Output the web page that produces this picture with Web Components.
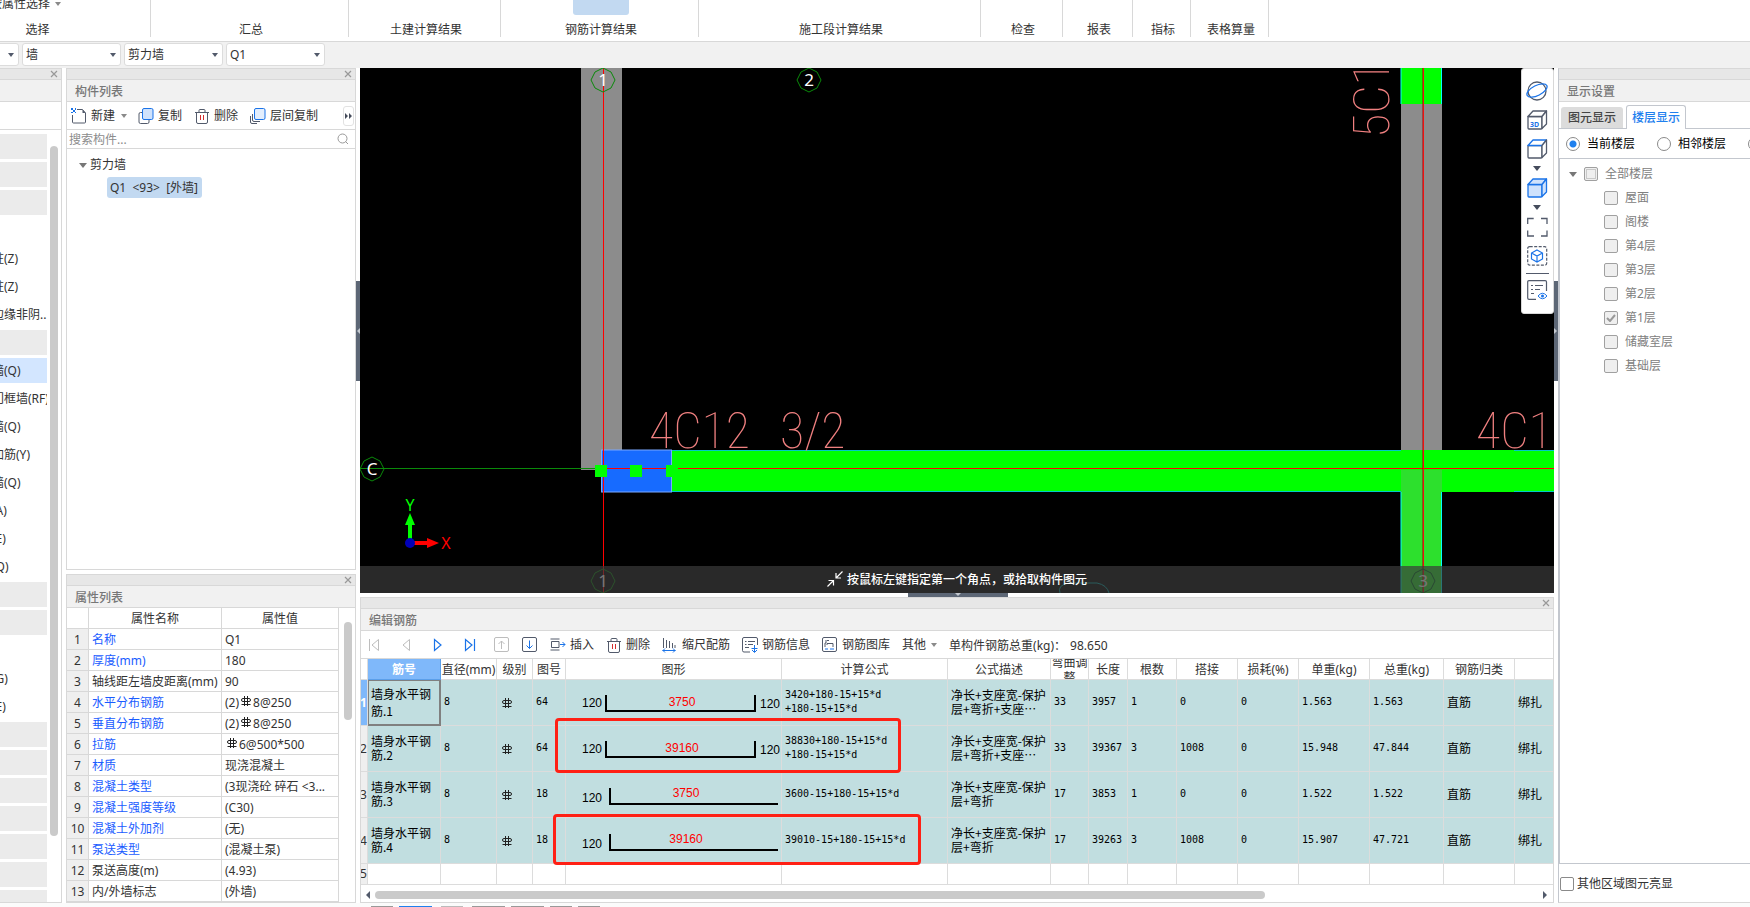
<!DOCTYPE html>
<html lang="zh-CN">
<head>
<meta charset="utf-8">
<title>钢筋算量</title>
<style>
  body { margin: 0; background: #fff; color: #333; font: 12px/16px "Noto Sans", "Noto Sans CJK SC", sans-serif; }
</style>
</head>
<body>
<app-shell></app-shell>
<script>
const BASE = `
  *, *::before, *::after { box-sizing: border-box; }
  button { font: inherit; color: inherit; background: none; border: 0; padding: 0; margin: 0; white-space: nowrap; }
`;
const define = (name, html) => {
  const tpl = document.createElement('template');
  customElements.define(name, class extends HTMLElement {
    constructor() {
      super();
      this.attachShadow({ mode: 'open' });
    }
    connectedCallback() {
      if (this.shadowRoot.childNodes.length) return;
      tpl.innerHTML = `<style>${BASE}</style>` + (typeof html === 'function' ? html(this) : html);
      this.shadowRoot.append(tpl.content.cloneNode(true));
    }
  });
};

/* ---------- icons ---------- */
const D = '#525a6b', B = '#1a73e8', L = '#cfe2fc';
const trash = `<g fill="none" stroke="${D}"><path d="M1 4.500h14M5 4V2.500Q5 1.500 6 1.500h4Q11 1.500 11 2.500V4M2.500 4.500V14q0 1.500 1.500 1.500h8q1.500 0 1.500-1.500V4.500"/><path stroke="#d32f2f" d="M6.500 7v5M9.500 7v5"/></g>`;
const cube = (s, top, f) => `<g fill="${f}" stroke="${s}" stroke-width="1.300" stroke-linejoin="round"><path d="M1 6.500h14V18q0 1-1 1H2q-1 0-1-1z"/><path stroke="${top}" d="M1 6.500L6 1h13.500L15 6.500z"/><path d="M19.500 1v13L15 18.500V6.500z"/></g>`;
const ICONS = {
  close: [8, 8, `<path d="M1 1l6 6M7 1l-6 6" stroke="#999" stroke-width="1.200" fill="none"/>`],
  caret: [6, 4, `<path d="M0 0h6L3 4z" fill="#525a6b"/>`],
  caretGray: [6, 4, `<path d="M0 0h6L3 4z" fill="#8a8a8a"/>`],
  caretBig: [8, 5, `<path d="M0 0h8L4 5z" fill="#777"/>`],
  caretDark: [8, 5, `<path d="M0 0h8L4 5z" fill="#454c5c"/>`],
  more: [8, 6, `<path d="M0 0l3 3-3 3zM4 0l3 3-3 3z" fill="#444b5a"/>`],
  search: [12, 12, `<g fill="none" stroke="#999"><circle cx="5.500" cy="5.500" r="4.500"/><path d="M8.500 8.500L11 11"/></g>`],
  add: [16, 16, `<path d="M6 1.500h5.500l3 3.500v9q0 1-1 1h-11q-1 0-1-1V7" fill="none" stroke="${D}"/><path d="M11.500 1.500v3.500h3z" fill="${D}"/><g fill="${B}"><path d="M0 0h2v2H0zM4 0h1v2H4zM2 2h2v2H2zM0 4h2v1H0zM4 4h1v1H4z"/></g>`],
  copy: [16, 16, `<rect x="1" y="4.500" width="10" height="11" rx="1.500" fill="#fff" stroke="${D}"/><rect x="4.500" y=".5" width="10.500" height="11" rx="1.500" fill="${L}" stroke="${B}"/>`],
  layerCopy: [16, 16, `<path d="M.5 8v6q0 1.500 1.500 1.500h5M2.500 6v6q0 1.500 1.500 1.500h6" fill="none" stroke="${D}"/><rect x="4.500" y=".5" width="10.500" height="11" rx="1.500" fill="#e3eefd" stroke="${B}"/>`],
  trash: [16, 16, trash],
  first: [12, 14, `<path d="M1.500 1v12M10.500 1.500v11L4 7z" fill="none" stroke="#bdbdbd"/>`],
  prev: [12, 14, `<path d="M9.500 1.500v11L3 7z" fill="none" stroke="#bdbdbd"/>`],
  next: [12, 14, `<path d="M2.500 1.500v11L9 7z" fill="none" stroke="${B}" stroke-width="1.200"/>`],
  last: [12, 14, `<path d="M10.500 1v12M1.500 1.500v11L8 7z" fill="none" stroke="${B}" stroke-width="1.200"/>`],
  up: [16, 16, `<g fill="none" stroke="#bdbdbd"><rect x=".5" y=".5" width="14" height="14" rx="1.500"/><path d="M7.500 12V4M4.500 7l3-3 3 3"/></g>`],
  down: [16, 16, `<rect x=".5" y=".5" width="14" height="14" rx="1.500" fill="none" stroke="${D}"/><path d="M7.500 3.500v8M4.500 8.500l3 3 3-3" fill="none" stroke="${B}"/>`],
  insert: [16, 14, `<path d="M9 3.500H1.500v6H9zM.500 1h9M.500 12h9" fill="none" stroke="${D}"/><path d="M10 6.500h5M12.500 4L15 6.500 12.500 9" fill="none" stroke="${B}"/>`],
  scale: [16, 16, `<path d="M1.500 1v10M4.500 3v8M7.500 4v7M10.500 6v5M13 8v3" fill="none" stroke="${D}"/><path d="M.5 13.500h13M3 11.500l-2 2 2 2M11 11.500l2 2-2 2" fill="none" stroke="${B}"/>`],
  info: [16, 16, `<path d="M15.500 8V2q0-1.500-1.500-1.500H2Q.5.500.5 2v11.500Q.5 15 2 15h6M3 4.500h1.500M6 4.500h7M3 7.500h1.500M6 7.500h5M3 10.500h4" fill="none" stroke="${D}"/><path d="M12.500 8v7M9.500 11.500h6M10 13l2.500 2.500L15 13" fill="none" stroke="${B}"/>`],
  library: [16, 16, `<rect x=".5" y=".5" width="14" height="14" rx="1.500" fill="none" stroke="${D}"/><path d="M4 3v3H3v4M5 8V6.500h6V10M5 3.500h2" fill="none" stroke="${D}"/><path d="M3 12h3M8 12h4" stroke="${B}"/>`],
  orbit: [22, 20, `<circle cx="11" cy="10" r="9" fill="none" stroke="${D}" stroke-width="1.300"/><ellipse cx="11" cy="9.500" rx="11" ry="5" transform="rotate(-27 11 9.500)" fill="none" stroke="${B}" stroke-width="1.300"/>`],
  cube3d: [21, 20, cube(D, D, '#fff') + `<text x="3" y="17" font-family="Noto Sans" font-weight="700" font-size="7" fill="${B}">3D</text>`],
  cubeTop: [21, 20, cube(D, B, '#fff')],
  cubeFull: [21, 20, cube(B, B, L)],
  frame: [21, 20, `<path d="M.7 7V1.500h6M14 1.500h6V7M20 13.500V19h-6M7 19H.7V13.500" fill="none" stroke="${D}" stroke-width="1.300"/>`],
  pick: [21, 20, `<rect x=".7" y=".7" width="19" height="18.500" rx="2" fill="none" stroke="${D}" stroke-width="1.200" stroke-dasharray="3 1.500"/><path d="M10 4l5.500 3v6L10 16l-5.500-3V7zM4.500 7L10 10l5.500-3M10 10v6" fill="none" stroke="${B}" stroke-width="1.200"/>`],
  listEye: [21, 20, `<path d="M19.500 11V2q0-1.300-1.300-1.300H2Q.7.700.7 2v16q0 1.300 1.300 1.300h7M4 5.500h2M8 5.500h8M4 9.500h2M8 9.500h5M4 13.500h3" fill="none" stroke="${D}" stroke-width="1.200"/><path d="M11 16q4.500-5.500 9 0-4.500 5.500-9 0z" fill="#fff" stroke="${B}"/><circle cx="15.500" cy="16" r="1.500" fill="${B}"/>`],
  converge: [16, 16, `<path d="M15.500.500L9 7M9 2v5h5M.500 15.500L6.500 9.500M1.500 9.500h5v5" fill="none" stroke="#fff" stroke-width="1.200"/>`],
  rebar: [10, 11, `<path d="M3.500 0v10M6.500 0v10M.500 8.500h9" fill="none" stroke="#222"/><rect x=".5" y="2.500" width="9" height="3" rx="1.500" fill="none" stroke="#222"/>`],
  left: [4, 8, `<path d="M4 0v8L0 4z" fill="#525a6b"/>`],
  right: [4, 8, `<path d="M0 0v8l4-4z" fill="#525a6b"/>`]
};
define('ui-icon', el => {
  const [w, h, body] = ICONS[el.getAttribute('name')];
  return `<style>:host { display: inline-block; flex: none; width: ${w}px; height: ${h}px; } svg { display: block; }</style>
    <svg width="${w}" height="${h}" viewBox="0 0 ${w} ${h}" aria-hidden="true">${body}</svg>`;
});

/* ---------- generic parts ---------- */
define('dock-panel', el => `<style>
    :host { display: flex; flex-direction: column; border: 1px solid #d8d8d8; background: #fff; min-width: 0; min-height: 0; overflow: hidden; }
    .grip { flex: none; height: 11px; background: #e7e7e7; border-bottom: 1px solid #d8d8d8; display: flex; justify-content: flex-end; align-items: center; padding-right: 3px; }
    .grip button { display: flex; width: 8px; height: 8px; }
    h2 { flex: none; margin: 0; height: 22px; padding-left: 8px; font-size: 12px; line-height: 23px; font-weight: 500; color: #777; background: #f1f1f1; border-bottom: 1px solid #d8d8d8; }
    .body { flex: 1; min-height: 0; display: flex; flex-direction: column; }
  </style>
  <div class="grip">${el.hasAttribute('fixed') ? '' : '<button aria-label="关闭"><ui-icon name="close"></ui-icon></button>'}</div>
  <h2>${el.getAttribute('heading') || ''}</h2>
  <div class="body"><slot></slot></div>`);

define('tool-button', el => `<style>
    :host { display: block; flex: none; }
    button { display: flex; align-items: center; gap: 4px; height: 20px; line-height: 22px; }
  </style>
  <button ${el.title ? `aria-label="${el.title}"` : ''}>${el.getAttribute('icon') ? `<ui-icon name="${el.getAttribute('icon')}"></ui-icon>` : ''}<slot></slot></button>`);

/* ---------- ribbon ---------- */
define('ribbon-group', `<style>
    :host { display: flex; flex: none; flex-direction: column; justify-content: space-between; align-items: center; height: 37px; padding-left: 3px; border-right: 1px solid #d8d8d8; }
    .label { height: 15px; line-height: 16px; }
    .tools { height: 15px; display: flex; align-items: flex-start; width: 100%; justify-content: center; }
  </style>
  <div class="tools"><slot></slot></div><div class="label"><slot name="label"></slot></div>`);

define('ribbon-bar', `<style>
    :host { display: flex; height: 42px; background: #fff; border-bottom: 1px solid #d8d8d8; overflow: hidden; }
    .w1 { width: 229px; margin-left: -78px; } .w2 { width: 198px; } .w3 { width: 152px; } .w4 { width: 198px; } .w5 { width: 282px; }
    .w6 { width: 82px; } .w7 { width: 70px; } .w8 { width: 58px; } .w9 { width: 78px; }
    .on { width: 56px; height: 15px; background: #c2d9f1; border-radius: 0 0 3px 3px; }
    .menu { display: flex; align-items: center; gap: 5px; width: 100%; height: 16px; margin-top: -4px; padding-left: 65px; line-height: 16px; }
  </style>
  <ribbon-group class="w1"><button class="menu">按属性选择<ui-icon name="caretGray"></ui-icon></button><span slot="label">选择</span></ribbon-group>
  <ribbon-group class="w2"><span slot="label">汇总</span></ribbon-group>
  <ribbon-group class="w3"><span slot="label">土建计算结果</span></ribbon-group>
  <ribbon-group class="w4"><button class="on" aria-label="查看钢筋量"></button><span slot="label">钢筋计算结果</span></ribbon-group>
  <ribbon-group class="w5"><span slot="label">施工段计算结果</span></ribbon-group>
  <ribbon-group class="w6"><span slot="label">检查</span></ribbon-group>
  <ribbon-group class="w7"><span slot="label">报表</span></ribbon-group>
  <ribbon-group class="w8"><span slot="label">指标</span></ribbon-group>
  <ribbon-group class="w9"><span slot="label">表格算量</span></ribbon-group>`);

define('filter-bar', `<style>
    :host { display: flex; gap: 3px; height: 26px; padding-top: 1px; background: #f1f1f1; overflow: hidden; }
    label { position: relative; flex: none; width: 99px; height: 23px; }
    .floor { margin-left: -80px; }
    select { appearance: none; width: 100%; height: 23px; padding: 1px 4px 0 3px; font: inherit; line-height: 20px; color: #333; background: #fff; border: 1px solid #dcdcdc; border-radius: 3px; }
    ui-icon { position: absolute; right: 5px; top: 10px; }
  </style>
  <label class="floor"><select aria-label="楼层"><option></option></select><ui-icon name="caret"></ui-icon></label>
  <label><select aria-label="类别"><option>墙</option></select><ui-icon name="caret"></ui-icon></label>
  <label><select aria-label="类型"><option>剪力墙</option></select><ui-icon name="caret"></ui-icon></label>
  <label><select aria-label="构件"><option>Q1</option></select><ui-icon name="caret"></ui-icon></label>`);

/* ---------- left navigation ---------- */
const NAV = ['#', '#', '#', '', '柱(Z)', '柱(Z)', '边缘非阴..', '#', '*墙(Q)', '门框墙(RF)', '墙(Q)', '加筋(Y)', '墙(Q)', '(A)', '(E)', '(Q)',
  '#', '#', '', '(G)', '(E)', '#', '#', '#', '#', '#', '#', '#'];
define('module-nav', `<style>
    :host { display: flex; flex: 1; min-height: 0; overflow: hidden; border-top: 1px solid #d8d8d8; margin-top: 27px; }
    ul { list-style: none; margin: 0; padding: 4px 0 0; width: 47px; display: flex; flex-direction: column; gap: 3px; overflow: hidden; }
    li { flex: none; height: 25px; line-height: 26px; text-indent: -8px; white-space: nowrap; overflow: hidden; }
    .group { background: #ebebeb; } .sel { background: #d3e6ff; }
    .bar { width: 8px; height: 690px; margin: 16px 0 0 3px; border-radius: 4px; background: #cacaca; flex: none; }
  </style>
  <ul>${NAV.map(t => t === '#' ? '<li class="group"></li>' : t[0] === '*' ? `<li class="sel">${t.slice(1)}</li>` : `<li>${t}</li>`).join('')}</ul>
  <div class="bar"></div>`);

define('component-list', `<style>
    :host { display: flex; flex-direction: column; }
    .tools { display: flex; align-items: center; height: 28px; padding-left: 4px; border-bottom: 1px solid #d8d8d8; }
    .tools tool-button { margin-right: 12px; }
    .tools .first { margin-right: 11px; }
    .new { gap: 6px; display: flex; align-items: center; }
    .more { margin-left: auto; margin-right: 1px; width: 11px; height: 20px; border: 1px solid #e2e2e2; border-radius: 3px; display: flex; align-items: center; justify-content: center; }
    .search { display: flex; align-items: center; height: 19px; padding: 0 6px 0 2px; border-bottom: 1px solid #d8d8d8; }
    input { flex: 1; min-width: 0; border: 0; outline: 0; padding: 1px 0 0; height: 18px; font: inherit; background: none; }
    input::placeholder { color: #8c8c8c; opacity: 1; }
    ul { list-style: none; margin: 0; padding: 0; }
    .root { padding: 8px 0 0 12px; line-height: 16px; }
    .node { display: flex; align-items: center; gap: 3px; }
    .sel { display: inline-block; margin: 4px 0 0 28px; padding: 0 4px 0 3px; height: 21px; line-height: 22px; border-radius: 3px; background: #c2d9f1; white-space: pre; }
  </style>
  <div class="tools">
    <tool-button class="first" icon="add"><span class="new">新建<ui-icon name="caretGray"></ui-icon></span></tool-button>
    <tool-button icon="copy">复制</tool-button>
    <tool-button icon="trash">删除</tool-button>
    <tool-button icon="layerCopy">层间复制</tool-button>
    <button class="more" aria-label="更多"><ui-icon name="more"></ui-icon></button>
  </div>
  <div class="search"><input aria-label="搜索构件" placeholder="搜索构件..."><ui-icon name="search"></ui-icon></div>
  <ul class="root"><li><div class="node"><ui-icon name="caretBig"></ui-icon>剪力墙</div>
    <ul><li><span class="sel">Q1  &lt;93&gt;  [外墙]</span></li></ul></li></ul>`);

const R = '<ui-icon class="rebar" name="rebar"></ui-icon>';
const PROPS = [['*名称', 'Q1'], ['*厚度(mm)', '180'], ['轴线距左墙皮距离(mm)', '90'], ['*水平分布钢筋', `(2)${R}8@250`], ['*垂直分布钢筋', `(2)${R}8@250`],
  ['*拉筋', `${R}6@500*500`], ['*材质', '现浇混凝土'], ['*混凝土类型', '(3现浇砼 碎石 &lt;3...'], ['*混凝土强度等级', '(C30)'], ['*混凝土外加剂', '(无)'],
  ['*泵送类型', '(混凝土泵)'], ['泵送高度(m)', '(4.93)'], ['内/外墙标志', '(外墙)']];
define('property-table', `<style>
    :host { display: flex; }
    table { width: 272px; table-layout: fixed; border-collapse: separate; border-spacing: 0; }
    th, td { height: 21px; line-height: 18px; padding: 2px 0 0 3px; font-weight: 400; text-align: left; white-space: nowrap; overflow: hidden; border-right: 1px solid #d8d8d8; border-bottom: 1px solid #d8d8d8; }
    thead th { text-align: center; padding: 2px 0 0; }
    tbody th { background: #efefef; text-align: center; padding: 2px 0 0; }
    .key { color: #1a5cff; }
    .rebar { margin: 0 2px; vertical-align: 0; }
    .bar { width: 8px; height: 98px; margin: 14px 0 0 5px; border-radius: 4px; background: #cacaca; }
  </style>
  <table><colgroup><col style="width:22px"><col style="width:133px"><col></colgroup>
  <thead><tr><th></th><th>属性名称</th><th>属性值</th></tr></thead>
  <tbody>${PROPS.map(([k, v], i) => `<tr><th>${i + 1}</th><td class="${k[0] === '*' ? 'key' : ''}">${k.replace('*', '')}</td><td>${v}</td></tr>`).join('')}</tbody></table>
  <div class="bar"></div>`);

/* ---------- drawing view ---------- */
const bubble = (x, y, t, c = '#0a8a0a', f = '#fff') => `<polygon points="${[0, 45, 90, 135, 180, 225, 270, 315].map(a => {
  const r = a * Math.PI / 180; return Math.round(x + 12 * Math.cos(r)) + ',' + Math.round(y + 12 * Math.sin(r)); }).join(' ')}" fill="none" stroke="${c}"/>
  <text x="${x}" y="${y + 6}" text-anchor="middle" font-size="17" fill="${f}">${t}</text>`;
define('cad-view', `<style>
    :host { display: block; position: relative; background: #000; min-height: 0; overflow: hidden; }
    svg { display: block; width: 100%; height: 100%; }
    svg text { font-family: "Noto Sans", sans-serif; }
    svg .cad { font-family: "Roboto Condensed", Lato, sans-serif; font-weight: 100; font-size: 50px; fill: #f08080; white-space: pre; }
    .hint { position: absolute; left: 0; right: 0; bottom: 0; height: 27px; display: flex; align-items: center; justify-content: center; gap: 4px; background: rgba(59,59,59,.7); color: #fff; font-weight: 500; }
    .hint span { padding-top: 1px; }
    .hint ui-icon { margin-bottom: 2px; }
    .palette { position: absolute; right: 0; top: 0; width: 33px; height: 246px; padding: 12px 1px 0 0; background: #fff; border: 1px solid #d8d8d8; border-radius: 3px; display: flex; flex-direction: column; align-items: center; gap: 9px; }
    .palette button { display: flex; }
    .palette .tight { margin-top: -2px; margin-bottom: -2px; }
    .palette hr { width: 23px; margin: -2px 0 -3px; border: 0; border-top: 1px solid #525a6b; }
  </style>
  <svg aria-label="平面图">
    <rect x="221" y="0" width="41" height="402" fill="#8c8c8c"/>
    <path d="M0 400.500h235" stroke="#0a8a0a" fill="none"/>
    <rect x="311" y="382" width="883" height="42" fill="#0f0"/>
    <path d="M311 382.500h730M311 423.500h730M1154 382.500h40M1154 423.500h40" stroke="#00c8c8" fill="none"/>
    <rect x="1041" y="0" width="41" height="36" fill="#0f0"/>
    <rect x="1041" y="36" width="41" height="346" fill="#8c8c8c"/>
    <rect x="1041" y="402" width="41" height="123" fill="#2de02d"/>
    <path d="M1041 0v36M1081.500 0v36M1041 424v101M1081.500 424v101" stroke="#0ff" fill="none"/>
    <rect x="241.500" y="382" width="70" height="42" fill="#176bff" stroke="#7aa8ff"/>
    <rect x="247" y="400" width="59" height="1" fill="#f00"/>
    <rect x="317" y="400" width="877" height="1" fill="#f00"/>
    <rect x="1062" y="0" width="1" height="525" fill="#a00000" fill-opacity=".5"/>
    <rect x="1063" y="0" width="1" height="525" fill="#f01010"/>
    <rect x="243" y="0" width="1" height="525" fill="#f00"/>
    <path d="M235 397h12v12h-12zM270 397h12v12h-12zM306 397h12v12h-12z" fill="#0f0"/>
    <text class="cad" x="289" y="380">4C12</text>
    <text class="cad" x="420" y="380">3/2</text>
    <text class="cad" x="1116" y="380">4C12</text>
    <text class="cad" transform="translate(1029 70) rotate(-90)">5C1</text>
    ${bubble(243, 12, '1')}${bubble(449, 12, '2')}${bubble(12, 401, 'C')}
    ${bubble(243, 513, '1')}${bubble(1063, 513, '3', '#062')}
    <path d="M700 525q-3-8 9-10h28q10 2 12 10" fill="none" stroke="#0aa"/>
    <path d="M50 471v-14" stroke="#0f0" stroke-width="4"/><path d="M45 457l5-12 5 12z" fill="#0f0"/>
    <path d="M54 475h14" stroke="#f00" stroke-width="4"/><path d="M67 470l12 5-12 5z" fill="#f00"/>
    <circle cx="50" cy="475" r="5" fill="#0000b8"/>
    <text x="50" y="443" text-anchor="middle" font-size="16" fill="#0f0">Y</text>
    <text x="86" y="481" text-anchor="middle" font-size="16" fill="#f00">X</text>
  </svg>
  <div class="hint"><ui-icon name="converge"></ui-icon><span>按鼠标左键指定第一个角点，或拾取构件图元</span></div>
  <div class="palette">
    <button aria-label="动态观察"><ui-icon name="orbit"></ui-icon></button>
    <button aria-label="三维"><ui-icon name="cube3d"></ui-icon></button>
    <button aria-label="俯视"><ui-icon name="cubeTop"></ui-icon></button>
    <button aria-label="更多视图" class="tight"><ui-icon name="caretDark"></ui-icon></button>
    <button aria-label="实体"><ui-icon name="cubeFull"></ui-icon></button>
    <button aria-label="更多样式" class="tight"><ui-icon name="caretDark"></ui-icon></button>
    <button aria-label="全屏"><ui-icon name="frame"></ui-icon></button>
    <button aria-label="局部三维"><ui-icon name="pick"></ui-icon></button>
    <hr>
    <button aria-label="显示设置"><ui-icon name="listEye"></ui-icon></button>
  </div>`);

/* ---------- rebar editor ---------- */
const shapeU = v => `<svg class="shape" width="215" height="45" role="img" aria-label="U形"><path d="M40 15v16h149V15" fill="none" stroke="#000" stroke-width="2"/>
  <text x="16" y="27">120</text><text x="194" y="28">120</text><text class="v" x="116" y="26">${v}</text></svg>`;
const shapeL = v => `<svg class="shape" width="215" height="45" role="img" aria-label="L形"><path d="M44 16v16h168" fill="none" stroke="#000" stroke-width="2"/>
  <text x="16" y="30">120</text><text class="v" x="120" y="25">${v}</text></svg>`;
const HEADS = ['直径(mm)', '级别', '图号', '图形', '计算公式', '公式描述', '弯曲调整', '长度', '根数', '搭接', '损耗(%)', '单重(kg)', '总重(kg)', '钢筋归类', ''];
const WIDTHS = [7, 73, 56, 36, 33, 216, 166, 103, 38, 39, 49, 61, 61, 71, 74, 71];
const d1 = '净长+支座宽-保护<br>层+弯折+支座…', d2 = '净长+支座宽-保护<br>层+弯折';
const ROWS = [
  ['64', shapeU(3750), '3420+180-15+15*d<br>+180-15+15*d', d1, '33', '3957', '1', '0', '1.563', '1.563'],
  ['64', shapeU(39160), '38830+180-15+15*d<br>+180-15+15*d', d1, '33', '39367', '3', '1008', '15.948', '47.844'],
  ['18', shapeL(3750), '3600-15+180-15+15*d', d2, '17', '3853', '1', '0', '1.522', '1.522'],
  ['18', shapeL(39160), '39010-15+180-15+15*d', d2, '17', '39263', '3', '1008', '15.907', '47.721']];
const rebarRow = ([no, shape, calc, desc, bend, len, n, lap, w, tw], i) => `<tr>
  <th class="${i ? '' : 'cur'}">${i + 1}</th><td class="cjk ${i ? '' : 'focus'}">墙身水平钢<br>筋.${i + 1}</td><td>8</td><td class="lv"><ui-icon name="rebar"></ui-icon></td>
  <td>${no}</td><td class="pic">${shape}</td><td>${calc}</td><td class="cjk">${desc}</td><td>${bend}</td><td>${len}</td><td>${n}</td><td>${lap}</td><td>0</td>
  <td>${w}</td><td>${tw}</td><td class="cjk">直筋</td><td class="cjk">绑扎</td></tr>`;
define('rebar-editor', `<style>
    :host { display: flex; flex-direction: column; position: relative; min-width: 0; }
    .tools { display: flex; align-items: center; height: 28px; padding-left: 7px; border-bottom: 1px solid #d8d8d8; white-space: nowrap; overflow: hidden; }
    .nav { display: flex; gap: 20px; margin-right: 18px; }
    .move { display: flex; gap: 12px; margin-right: 12px; }
    .tools > tool-button { margin-right: 12px; }
    .other { display: flex; align-items: center; gap: 5px; }
    .sum { line-height: 22px; height: 20px; }
    .sum b { font-weight: 400; margin-left: 4px; }
    table { width: 100%; table-layout: fixed; border-collapse: separate; border-spacing: 0; }
    th, td { border-right: 1px solid #dcdcdc; border-bottom: 1px solid #dcdcdc; overflow: hidden; }
    th:last-child, td:last-child { border-right: 0; }
    thead th { height: 21px; padding: 0; font-weight: 400; line-height: 15px; }
    thead div { display: flex; align-items: center; justify-content: center; height: 20px; padding-top: 1px; overflow: hidden; white-space: nowrap; }
    thead .wrap { white-space: normal; text-align: center; }
    thead .on { background: #7fb8fa; color: #fff; font-weight: 700; border-color: #5b9fea; }
    tbody td { height: 46px; padding: 0 0 2px 3px; background: #c1dee0; color: #000; font: 10px/14px "DejaVu Sans Mono", monospace; white-space: nowrap; text-align: left; }
    tbody .cjk { font: 12px/14px "Noto Sans CJK SC", sans-serif; }
    tbody .focus { line-height: 17px; border: 1px solid #808080; border-width: 1px 2px 2px 1px; padding: 0 0 1px 2px; }
    tbody .pic { padding: 0; }
    tbody .lv { padding: 2px 0 0 5px; }
    .lv ui-icon { display: block; }
    tbody th { padding: 0; background: #efefef; font-weight: 400; text-indent: -1px; text-align: left; overflow: visible; }
    tbody th.cur { background: #7fb8fa; color: #fff; font-weight: 700; }
    tbody .blank td { height: 21px; background: #fff; }
    .shape { display: block; }
    .shape text { font: 12px "Liberation Sans", sans-serif; fill: #000; }
    .shape .v { fill: #f00; text-anchor: middle; }
    .mark { position: absolute; border: 3px solid #ff2015; border-radius: 4px; pointer-events: none; }
    .m1 { left: 194px; top: 87px; width: 346px; height: 55px; }
    .m2 { left: 192px; top: 183px; width: 368px; height: 51px; }
    .scroll { display: flex; align-items: center; height: 17px; padding: 2px 6px 0 5px; gap: 5px; }
    .track { flex: 1; } .thumb { width: 76.5%; height: 8px; border-radius: 4px; background: #cacaca; }
  </style>
  <div class="tools">
    <div class="nav"><tool-button title="首个" icon="first"></tool-button><tool-button title="上一个" icon="prev"></tool-button><tool-button title="下一个" icon="next"></tool-button><tool-button title="末个" icon="last"></tool-button></div>
    <div class="move"><tool-button title="上移" icon="up"></tool-button><tool-button title="下移" icon="down"></tool-button></div>
    <tool-button icon="insert">插入</tool-button><tool-button icon="trash">删除</tool-button><tool-button icon="scale">缩尺配筋</tool-button><tool-button icon="info">钢筋信息</tool-button><tool-button icon="library">钢筋图库</tool-button><tool-button><span class="other">其他<ui-icon name="caretGray"></ui-icon></span></tool-button><span class="sum">单构件钢筋总重(kg)：<b>98.650</b></span>
  </div>
  <table><colgroup>${WIDTHS.map(w => `<col style="width:${w}px">`).join('')}<col></colgroup>
    <thead><tr><th></th><th class="on"><div>筋号</div></th>${HEADS.map(h => `<th><div class="${h === '弯曲调整' ? 'wrap' : ''}">${h}</div></th>`).join('')}</tr></thead>
    <tbody>${ROWS.map(rebarRow).join('')}<tr class="blank"><th>5</th>${'<td></td>'.repeat(16)}</tr></tbody></table>
  <div class="scroll"><ui-icon name="left"></ui-icon><div class="track"><div class="thumb"></div></div><ui-icon name="right"></ui-icon></div>
  <div class="mark m1"></div><div class="mark m2"></div>`);

/* ---------- floor display ---------- */
const FLOORS = ['屋面', '阁楼', '第4层', '第3层', '第2层', '第1层', '储藏室层', '基础层'];
define('floor-panel', `<style>
    :host { display: flex; flex: 1; flex-direction: column; min-height: 0; }
    .tabs { display: flex; align-items: flex-end; gap: 3px; height: 27px; padding-left: 2px; border-bottom: 1px solid #c3c7ce; }
    .tabs button { width: 62px; height: 21px; line-height: 20px; background: #dcdcdc; border-radius: 3px 3px 0 0; color: #444; font-weight: 500; }
    .tabs .on { width: 60px; height: 24px; line-height: 24px; margin-bottom: -1px; background: #fff; border: 1px solid #c3c7ce; border-bottom: 0; color: #1f80ee; }
    .modes { display: flex; align-items: center; gap: 22px; height: 30px; padding-left: 7px; border-bottom: 1px solid #c3c7ce; color: #000; overflow: hidden; }
    label { display: flex; align-items: center; gap: 7px; flex: none; white-space: nowrap; }
    input { appearance: none; margin: 0; flex: none; width: 14px; height: 14px; border: 1px solid #8a8a8a; background: #fff; border-radius: 2px; }
    input[type=radio] { border-radius: 50%; }
    input[type=radio]:checked { background: radial-gradient(circle, #1f80ee 3px, #fff 4px); }
    input:disabled { background: #efefef; border-color: #a0a0a0; }
    input.part { background: #efefef; box-shadow: inset 0 0 0 1px #efefef, inset 0 0 0 2px #c8c8c8; }
    .tick { position: relative; display: flex; }
    .tick svg { position: absolute; left: 2px; top: 3px; }
    ul { list-style: none; margin: 0; padding: 0; }
    .root { flex: 1; padding: 3px 0 0 9px; color: #808080; border-left: 1px solid #c3c7ce; }
    .head { display: flex; align-items: center; gap: 7px; height: 24px; }
    .kids { padding-left: 35px; }
    .kids label { height: 24px; }
    .foot { height: 39px; display: flex; align-items: center; padding-top: 1px; border-top: 1px solid #c3c7ce; }
    .foot label { gap: 3px; margin-left: 1px; }
  </style>
  <div class="tabs" role="tablist"><button role="tab">图元显示</button><button role="tab" class="on">楼层显示</button></div>
  <div class="modes"><label><input type="radio" name="m" checked>当前楼层</label><label><input type="radio" name="m">相邻楼层</label><label><input type="radio" name="m">全部楼层</label></div>
  <ul class="root"><li><div class="head"><ui-icon name="caretBig"></ui-icon><label><input type="checkbox" class="part" disabled>全部楼层</label></div>
    <ul class="kids">${FLOORS.map(f => `<li><label>${f === '第1层' ? '<span class="tick"><input type="checkbox" checked disabled><svg width="10" height="8"><path d="M1 4l3 3 5-6" fill="none" stroke="#999" stroke-width="2"/></svg></span>' : '<input type="checkbox" disabled>'}${f}</label></li>`).join('')}</ul></li></ul>
  <div class="foot"><label><input type="checkbox">其他区域图元亮显</label></div>`);

/* ---------- shell ---------- */
define('app-shell', `<style>
    :host { display: flex; flex-direction: column; height: 100vh; overflow: hidden; }
    ribbon-bar, filter-bar { flex: none; }
    main { flex: 1; min-height: 0; display: grid; grid-template-columns: 62px 290px minmax(0, 1fr) 192px; gap: 4px; }
    .col { display: flex; flex-direction: column; gap: 4px; min-height: 0; min-width: 0; position: relative; }
    .grow { flex: 1; }
    .col dock-panel:not(.grow) { flex: none; }
    .nav { border-left: 0; }
    .show { border-left-color: #c3c7ce; border-right: 0; }
    .split { position: absolute; background: #5d6776; display: flex; align-items: center; justify-content: center; color: #c4c9d0; }
    .v { width: 4px; height: 100px; top: 213px; } .l { left: -4px; } .r { right: -4px; }
    .h { height: 4px; width: 100px; bottom: 306px; left: calc(50% - 49px); }
    footer { flex: none; height: 4px; display: flex; align-items: flex-end; padding-left: 371px; gap: 6px; background: #fbfbfb; }
    footer i { height: 1px; width: 22px; background: #999; } footer .w { width: 33px; } footer .b { background: #1f80ee; margin-right: 3px; } footer .g { background: #bbb; margin-right: 3px; }
  </style>
  <ribbon-bar></ribbon-bar>
  <filter-bar></filter-bar>
  <main>
    <dock-panel class="nav"><module-nav></module-nav></dock-panel>
    <div class="col">
      <dock-panel class="grow" heading="构件列表"><component-list></component-list></dock-panel>
      <dock-panel heading="属性列表"><property-table></property-table></dock-panel>
    </div>
    <div class="col">
      <cad-view class="grow"></cad-view>
      <dock-panel heading="编辑钢筋"><rebar-editor></rebar-editor></dock-panel>
      <div class="split v l"><svg width="4" height="6"><path d="M4 0v6L1 3z" fill="currentColor"/></svg></div>
      <div class="split v r"><svg width="4" height="6"><path d="M0 0v6l3-3z" fill="currentColor"/></svg></div>
      <div class="split h"><svg width="6" height="4"><path d="M0 0h6L3 3z" fill="currentColor"/></svg></div>
    </div>
    <dock-panel class="show" fixed heading="显示设置"><floor-panel></floor-panel></dock-panel>
  </main>
  <footer><i></i><i class="w b"></i><i class="g"></i><i class="w"></i><i class="w"></i><i></i><i></i></footer>`);
</script>
</body>
</html>
